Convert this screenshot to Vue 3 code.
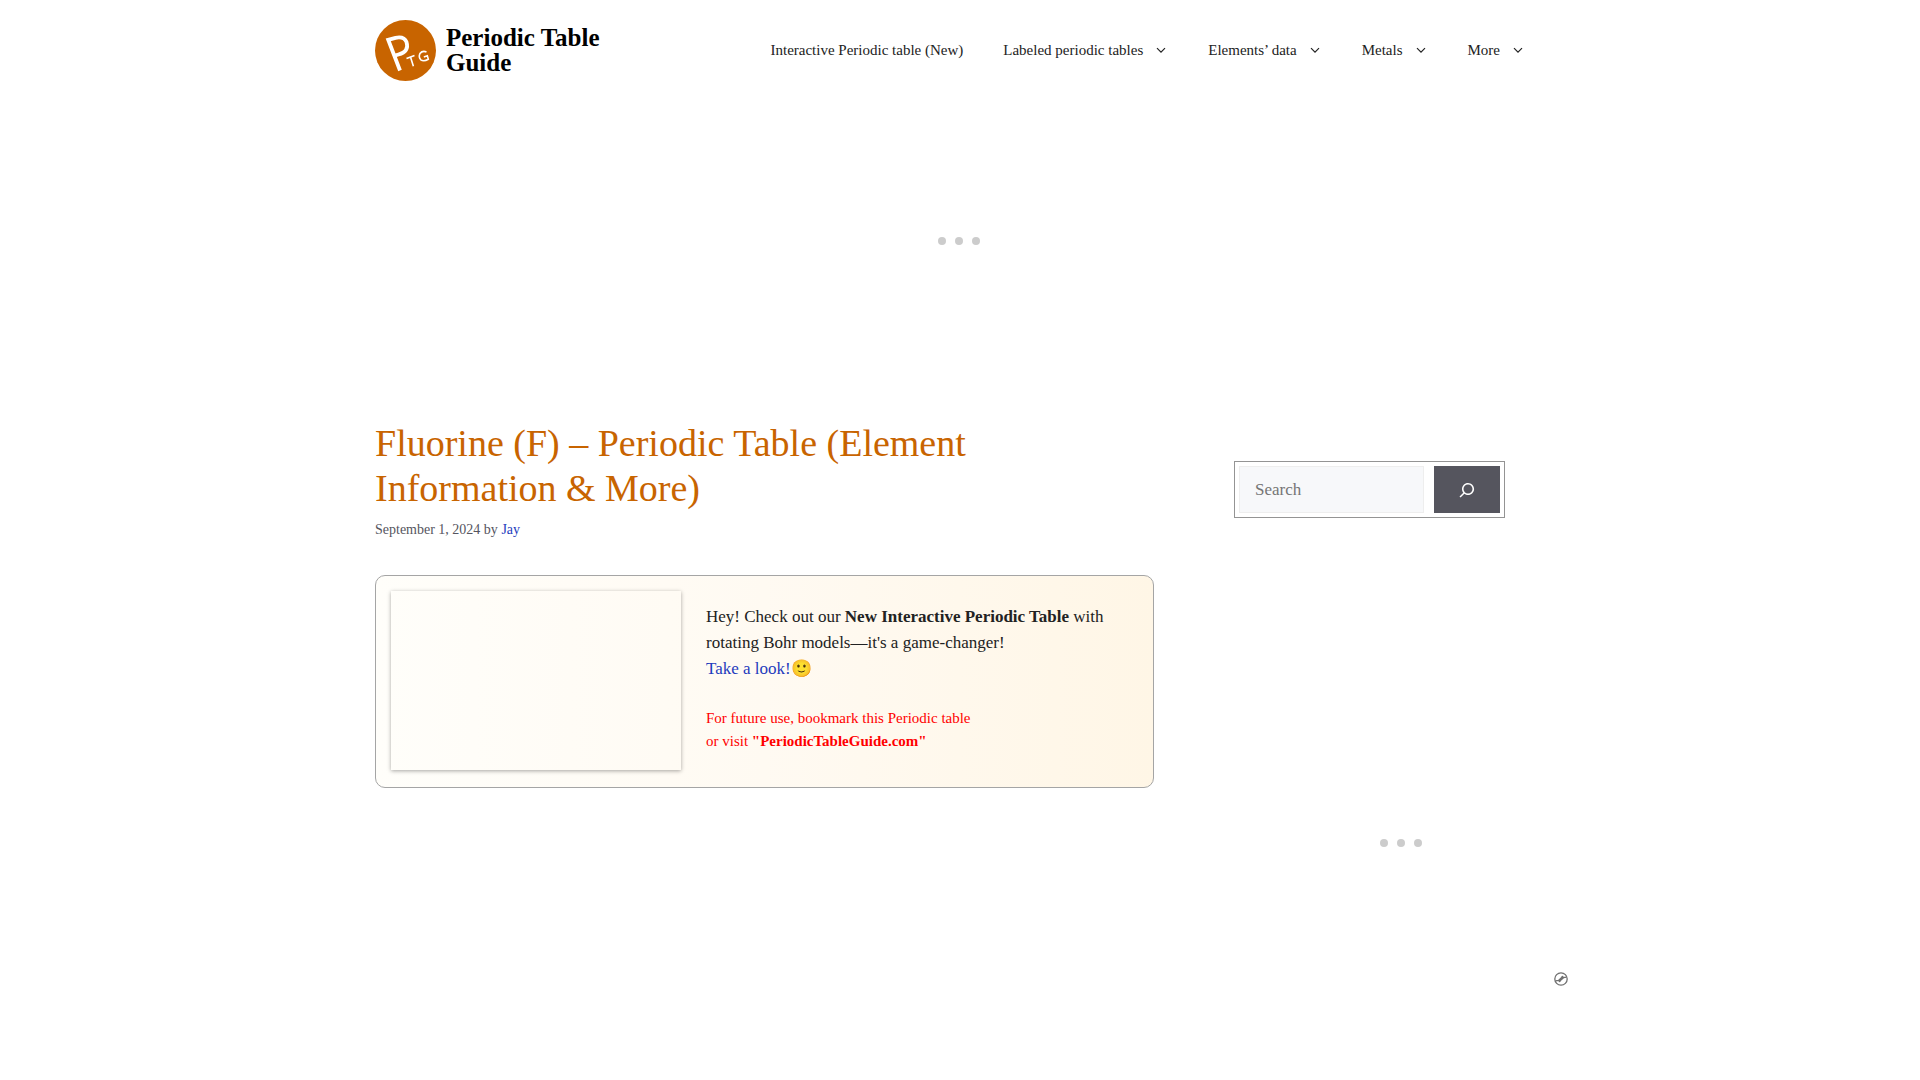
<script setup>
const navItems = [
  { label: 'Interactive Periodic table (New)', menu: false },
  { label: 'Labeled periodic tables', menu: true },
  { label: 'Elements’ data', menu: true },
  { label: 'Metals', menu: true },
  { label: 'More', menu: true },
]
</script>

<template>
  <div class="page">
    <header class="site-header">
      <a class="brand" href="#">
        <svg class="brand-mark" viewBox="0 0 61 61" aria-hidden="true">
          <circle cx="30.5" cy="30.5" r="30.5" fill="#c86400" />
          <g fill="none" stroke="#fff">
            <path d="M25 50.5 L13.2 19.8 L20.5 17.8 Q29 16 31.500 22 Q34.500 31.500 23.500 34.500 L18.800 35.800" stroke-width="3.8" />
            <path d="M31.500 38.500 L39.500 35.500 M35.500 37 L38.400 46.300" stroke-width="1.6" />
            <path d="M51.5 32 Q47.5 30.3 44.9 33.6 Q43.3 37 45.8 39.8 Q48.8 42 53.3 39.2 L52.3 35.8 L48.8 36.9" stroke-width="1.6" />
          </g>
        </svg>
        <span class="brand-name">Periodic Table<br />Guide</span>
      </a>
      <nav class="main-nav" aria-label="Primary">
        <a v-for="item in navItems" :key="item.label" href="#">
          {{ item.label }}
          <svg v-if="item.menu" class="chevron" viewBox="0 0 10 7" aria-hidden="true">
            <path d="M1 1.2 L5 5.2 L9 1.2" fill="none" stroke="currentColor" stroke-width="1.2" />
          </svg>
        </a>
      </nav>
    </header>

    <div class="ad ad-top">
      <span class="dots"><i></i><i></i><i></i></span>
    </div>

    <div class="columns">
      <main class="article">
        <h1>Fluorine (F) – Periodic Table (Element Information &amp; More)</h1>
        <p class="meta">September 1, 2024 by <a href="#">Jay</a></p>
        <section class="promo">
          <div class="promo-media"></div>
          <div class="promo-text">
            <p>
              Hey! Check out our <strong>New Interactive Periodic Table</strong> with
              rotating Bohr models—it's a game-changer!<br />
              <a href="#">Take a look!</a>🙂
            </p>
            <p class="note">
              For future use, bookmark this Periodic table<br />
              or visit <strong>"PeriodicTableGuide.com"</strong>
            </p>
          </div>
        </section>
      </main>

      <aside class="sidebar">
        <form class="search" role="search" @submit.prevent>
          <input type="search" placeholder="Search" aria-label="Search" />
          <button type="submit" aria-label="Search">
            <svg viewBox="0 0 24 24" aria-hidden="true">
              <path d="M13 5c-3.3 0-6 2.7-6 6 0 1.4.5 2.7 1.3 3.7l-3.8 3.8 1.1 1.1 3.8-3.8c1 .8 2.3 1.3 3.7 1.3 3.3 0 6-2.7 6-6S16.3 5 13 5zm0 10.5c-2.5 0-4.5-2-4.5-4.5s2-4.5 4.5-4.5 4.5 2 4.5 4.5-2 4.5-4.5 4.5z" fill="currentColor" />
            </svg>
          </button>
        </form>
        <div class="ad ad-side">
          <span class="dots"><i></i><i></i><i></i></span>
          <a class="ad-badge" href="#" aria-label="Ad provider">
            <svg viewBox="0 0 14 14" aria-hidden="true">
              <g fill="none" stroke="#707070" stroke-width="1.3">
                <circle cx="7" cy="7" r="6.2" />
                <path d="M1.5 8.8 L4.5 8.4 L8.5 4.8 M5.5 9.3 L9.5 5.7 L12.5 5.2" />
              </g>
              <g fill="#707070">
                <circle cx="8.5" cy="4.8" r="1" />
                <circle cx="5.5" cy="9.3" r="1" />
              </g>
            </svg>
          </a>
        </div>
      </aside>
    </div>
  </div>
</template>

<style>
body {
  margin: 0;
  background: #fff;
}
</style>

<style scoped>
.page {
  box-sizing: border-box;
  max-width: 1250px;
  margin: 0 auto;
  padding: 0 40px 40px;
  font: 17px/26px "Liberation Serif", "Times New Roman", serif;
  color: #222;
}
a {
  color: #1e3bbd;
  text-decoration: none;
}
p {
  margin: 0;
}
.site-header {
  display: flex;
  align-items: center;
  justify-content: space-between;
  padding: 20px 0;
}
.brand {
  display: flex;
  align-items: center;
  gap: 10px;
  color: #000;
}
.brand-mark {
  width: 61px;
  height: 61px;
}
.brand-name {
  padding-bottom: 1px;
  font-size: 25px;
  line-height: 25px;
  font-weight: 700;
}
.main-nav {
  display: flex;
  padding-bottom: 1px;
}
.main-nav a {
  display: flex;
  align-items: center;
  padding: 0 20px;
  font-size: 15px;
  line-height: 60px;
  color: #222;
  white-space: nowrap;
}
.chevron {
  width: 10px;
  height: 7px;
  margin: 0 2px 0 13px;
}
.ad {
  display: flex;
  align-items: center;
  justify-content: center;
  box-sizing: border-box;
  padding-right: 2px;
}
.ad-top {
  height: 280px;
}
.dots {
  display: flex;
  gap: 9px;
}
.dots i {
  width: 8px;
  height: 8px;
  border-radius: 50%;
  background: #ccc;
}
.columns {
  display: flex;
  gap: 80px;
  align-items: flex-start;
}
.article {
  flex: 1;
  min-width: 0;
  padding-top: 40px;
}
h1 {
  margin: 0;
  font-size: 38px;
  line-height: 45px;
  font-weight: 400;
  color: #c86400;
}
.meta {
  margin: 8px 0 34px;
  font-size: 14px;
  line-height: 22px;
  color: #555560;
}
.promo {
  display: flex;
  gap: 25px;
  padding: 15px;
  border: 1px solid #a5a5a5;
  border-radius: 10px;
  background: linear-gradient(to right, #fffefa, #fffaf2 50%, #fff6e6);
}
.promo-media {
  flex: 0 0 290px;
  height: 179px;
  margin-bottom: 2px;
  box-shadow: 0 1px 4px rgba(0, 0, 0, 0.35);
}
.promo-text {
  flex: 1;
  padding-top: 13px;
}
.note {
  margin-top: 25px;
  font-size: 15px;
  line-height: 23px;
  color: #f00;
}
.sidebar {
  flex: 0 0 311px;
  min-width: 0;
  padding-top: 80px;
}
.search {
  display: flex;
  gap: 10px;
  box-sizing: border-box;
  width: 271px;
  padding: 4px;
  border: 1px solid #949494;
}
.search input {
  flex: 1;
  min-width: 0;
  box-sizing: border-box;
  height: 47px;
  padding: 0 15px;
  border: 1px solid #eee;
  border-radius: 0;
  background: #f7f8fa;
  font: inherit;
  color: #666;
  appearance: none;
}
.search input::placeholder {
  color: #757575;
}
.search button {
  display: flex;
  align-items: center;
  justify-content: center;
  width: 66px;
  height: 47px;
  padding: 0;
  border: 0;
  background: #55555e;
  color: #fff;
}
.search button svg {
  width: 24px;
  height: 24px;
}
.ad-side {
  position: relative;
  width: 336px;
  height: 280px;
  margin-top: 185px;
}
.ad-badge {
  position: absolute;
  right: 2px;
  bottom: -3px;
  display: flex;
}
.ad-badge svg {
  width: 14px;
  height: 14px;
}
</style>
